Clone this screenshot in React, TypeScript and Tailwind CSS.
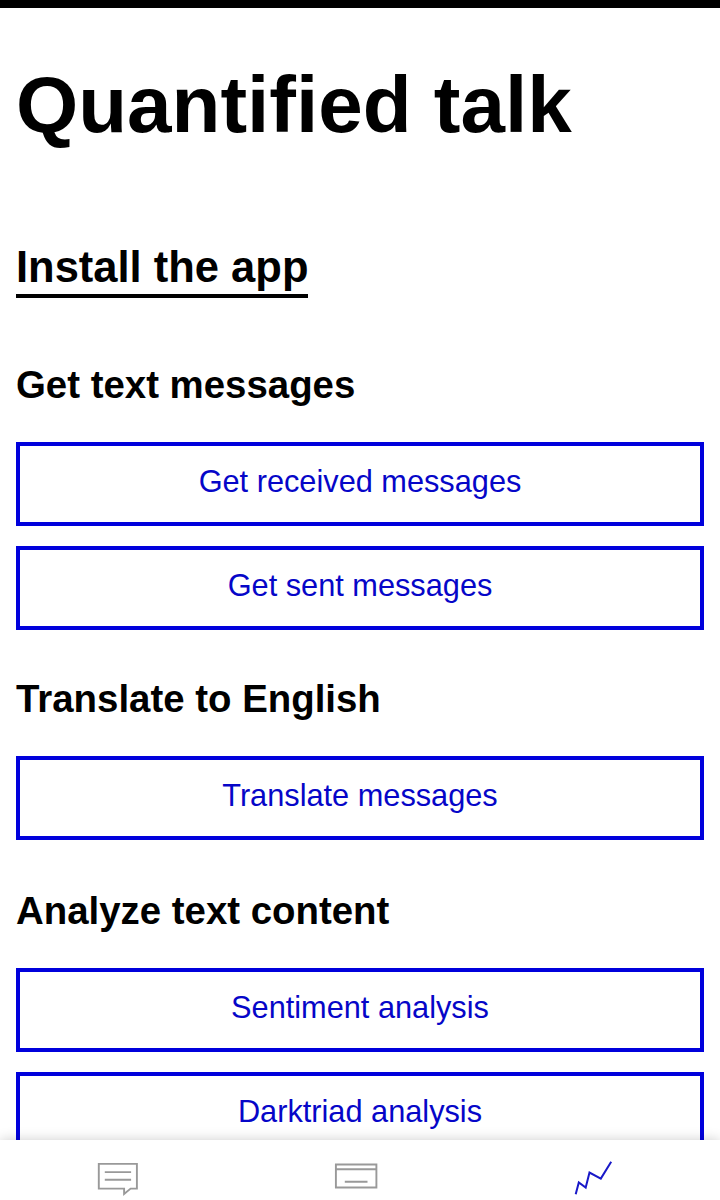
import React from "react";

function ActionButton({ children }: { children: React.ReactNode }) {
  return (
    <button className="block h-[84px] w-full shrink-0 border-4 border-[#0000dc] pb-[4px] text-center text-[30.72px] leading-[36px] text-[#0606c8]">
      {children}
    </button>
  );
}

function Section({ title, className, actions }: { title: string; className: string; actions: string[] }) {
  return (
    <section className={className}>
      <h3 className="mb-[34px] text-[38.4px] leading-[46px] font-bold">{title}</h3>
      <div className="flex flex-col gap-5">
        {actions.map((a) => (
          <ActionButton key={a}>{a}</ActionButton>
        ))}
      </div>
    </section>
  );
}

export default function App() {
  return (
    <div className="flex h-[1200px] w-full flex-col overflow-hidden bg-white font-['Liberation_Sans',Arial,sans-serif] text-black">
      <div className="h-2 shrink-0 bg-black" />
      <main className="min-h-0 flex-1 overflow-hidden px-4">
        <h1 className="mt-[51px] text-[80px] leading-[92px] font-bold">Quantified talk</h1>
        <h2 className="mt-[93px] flex h-[54px]">
          <a className="w-[292px] border-b-4 border-black pb-[3px] text-[43.5px] leading-[47px] font-bold whitespace-nowrap">Install the app</a>
        </h2>
        <Section className="mt-[64px]" title="Get text messages" actions={["Get received messages", "Get sent messages"]} />
        <Section className="mt-[46px]" title="Translate to English" actions={["Translate messages"]} />
        <Section className="mt-[48px]" title="Analyze text content" actions={["Sentiment analysis", "Darktriad analysis"]} />
      </main>
      <nav className="z-10 grid h-[60px] shrink-0 grid-cols-3 bg-white shadow-[0_0_12px_rgba(0,0,0,0.2)]">
        <svg className="h-[60px] w-[240px]" viewBox="0 0 240 60" fill="none" stroke="#999" strokeWidth="1.9">
          <path d="M98.800 23.900H136.900V48.600H130.600L124.100 54V48.600H98.800ZM104.800 32.100H131.100M104.800 39.800H131.100" />
        </svg>
        <svg className="h-[60px] w-[240px]" viewBox="0 0 240 60" fill="none" stroke="#999" strokeWidth="1.9">
          <path d="M95.900 24.500H136.400V47.500H95.900ZM95.900 29.200H136.400M104.800 41.700H127.500" />
        </svg>
        <svg className="h-[60px] w-[240px]" viewBox="0 0 240 60" fill="none" stroke="#1919c8" strokeWidth="2">
          <path d="M95.700 54.200L98.800 42.400L105.700 47.600L109.500 32.600L120.800 38.600L131.200 21.800" />
        </svg>
      </nav>
    </div>
  );
}
